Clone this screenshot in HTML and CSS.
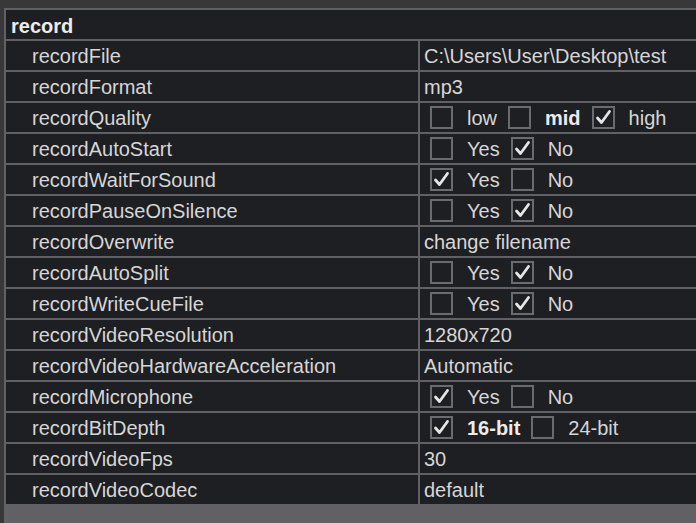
FILE: index.html
```html
<!DOCTYPE html>
<html lang="en">
<head>
    <meta charset="UTF-8">
    <meta name="viewport" content="width=device-width, initial-scale=1.0">
    <title>Settings - record</title>
    <link rel="stylesheet" href="styles.css">
</head>
<body>
    <div class="panel">
        <div class="grid">
            <!-- Section header -->
            <div class="cell section">record</div>

            <div class="cell key">recordFile</div>
            <div class="cell val">C:\Users\User\Desktop\test</div>

            <div class="cell key">recordFormat</div>
            <div class="cell val">mp3</div>

            <div class="cell key">recordQuality</div>
            <div class="cell val opts">
                <span class="box"></span><span class="opt">low</span>
                <span class="box"></span><span class="opt bold">mid</span>
                <span class="box checked"></span><span class="opt">high</span>
            </div>

            <div class="cell key">recordAutoStart</div>
            <div class="cell val opts">
                <span class="box"></span><span class="opt">Yes</span>
                <span class="box checked"></span><span class="opt">No</span>
            </div>

            <div class="cell key">recordWaitForSound</div>
            <div class="cell val opts">
                <span class="box checked"></span><span class="opt">Yes</span>
                <span class="box"></span><span class="opt">No</span>
            </div>

            <div class="cell key">recordPauseOnSilence</div>
            <div class="cell val opts">
                <span class="box"></span><span class="opt">Yes</span>
                <span class="box checked"></span><span class="opt">No</span>
            </div>

            <div class="cell key">recordOverwrite</div>
            <div class="cell val">change filename</div>

            <div class="cell key">recordAutoSplit</div>
            <div class="cell val opts">
                <span class="box"></span><span class="opt">Yes</span>
                <span class="box checked"></span><span class="opt">No</span>
            </div>

            <div class="cell key">recordWriteCueFile</div>
            <div class="cell val opts">
                <span class="box"></span><span class="opt">Yes</span>
                <span class="box checked"></span><span class="opt">No</span>
            </div>

            <div class="cell key">recordVideoResolution</div>
            <div class="cell val">1280x720</div>

            <div class="cell key">recordVideoHardwareAcceleration</div>
            <div class="cell val">Automatic</div>

            <div class="cell key">recordMicrophone</div>
            <div class="cell val opts">
                <span class="box checked"></span><span class="opt">Yes</span>
                <span class="box"></span><span class="opt">No</span>
            </div>

            <div class="cell key">recordBitDepth</div>
            <div class="cell val opts">
                <span class="box checked"></span><span class="opt bold">16-bit</span>
                <span class="box"></span><span class="opt">24-bit</span>
            </div>

            <div class="cell key">recordVideoFps</div>
            <div class="cell val">30</div>

            <div class="cell key">recordVideoCodec</div>
            <div class="cell val">default</div>
        </div>
    </div>

    <script>
        // Put a tick into every checked box
        const tick = '<svg viewBox="0 0 19 19" width="19" height="19"><polyline points="3.5,10 7.5,14.5 15.5,3.5" fill="none" stroke="#e6e6e6" stroke-width="2.8" stroke-linecap="round" stroke-linejoin="round"/></svg>';
        document.querySelectorAll(".box.checked").forEach((box) => {
            box.innerHTML = tick;
        });

        // Toggle boxes on click
        document.querySelectorAll(".box").forEach((box) => {
            box.addEventListener("click", () => {
                box.classList.toggle("checked");
                box.innerHTML = box.classList.contains("checked") ? tick : "";
            });
        });
    </script>
</body>
</html>
```

FILE: styles.css
```css
body {
    margin: 0;
    padding: 8px 0 0 4px;
    background-color: #38383b;
    font-family: "Liberation Sans", Arial, sans-serif;
    font-size: 20px;
    color: #d6d6d6;
    overflow: hidden;
}
.panel {
    width: 780px;
    min-height: calc(100vh - 8px);
    background-color: #616165;
}
.grid {
    display: grid;
    grid-template-columns: 412px 1fr;
    gap: 2px;
    padding: 2px;
}
.cell {
    background-color: #1e1f22;
    line-height: 23px;
    padding: 4px 5px 2px;
    white-space: nowrap;
}
.section {
    grid-column: 1 / 3;
    padding-top: 5px;
    padding-bottom: 1px;
    font-weight: bold;
    color: #ececec;
}
.key {
    padding-left: 26px;
}
.val {
    padding-left: 4px;
}
.opts {
    display: flex;
    align-items: center;
    padding-top: 3px;
    padding-bottom: 3px;
    padding-left: 10px;
}
.box {
    box-sizing: border-box;
    width: 23px;
    height: 23px;
    border: 2px solid #6b6b6f;
    display: flex;
    align-items: center;
    justify-content: center;
    cursor: pointer;
}
.opt {
    margin-left: 14px;
    margin-right: 11px;
    position: relative;
    top: 1px;
}
.bold {
    font-weight: bold;
    color: #ececec;
}
```
